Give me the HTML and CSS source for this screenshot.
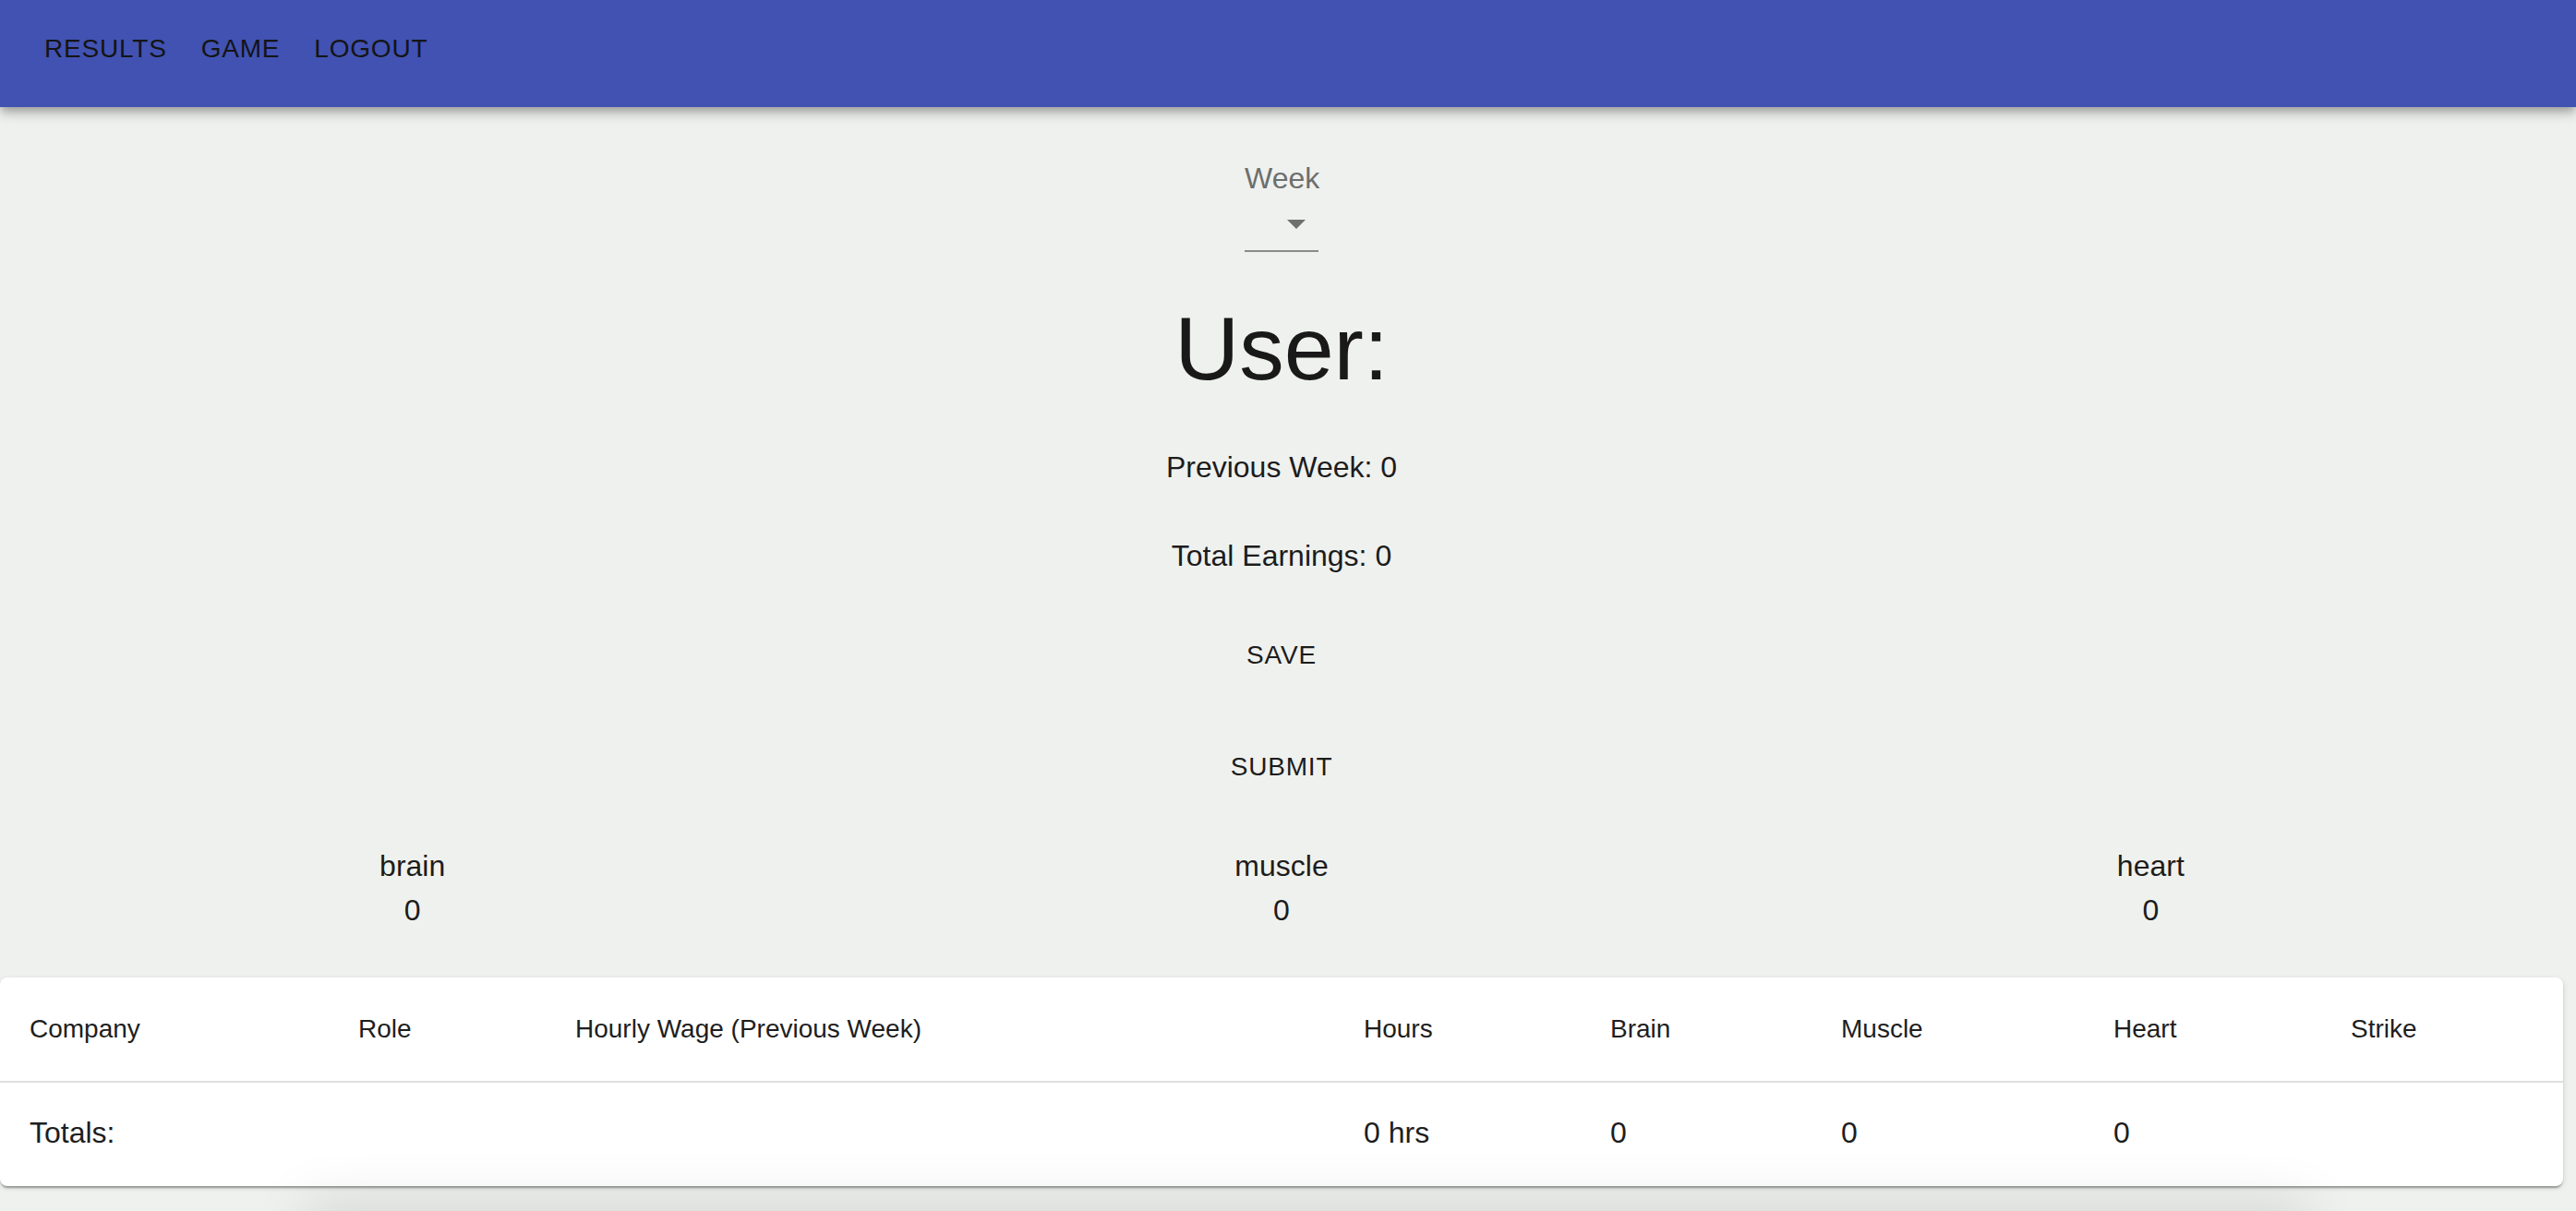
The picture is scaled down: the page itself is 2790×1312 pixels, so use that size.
FILE: index.html
```html
<!DOCTYPE html>
<html lang="en">
<head>
<meta charset="utf-8">
<title>Results</title>
<link rel="stylesheet" href="styles.css">
</head>
<body>
<header class="appbar">
  <nav class="toolbar">
    <a class="nav-btn">RESULTS</a>
    <a class="nav-btn">GAME</a>
    <a class="nav-btn">LOGOUT</a>
  </nav>
</header>
<main class="content">
  <div class="form-control">
    <label class="select-label">Week</label>
    <div class="select">
      <svg class="select-icon" viewBox="0 0 24 24" width="48" height="48"><path d="M7 10l5 5 5-5z"></path></svg>
    </div>
  </div>
  <h1 class="user-title">User:</h1>
  <p class="stat-line prev">Previous Week: 0</p>
  <p class="stat-line total">Total Earnings: 0</p>
  <button class="text-btn save">SAVE</button>
  <button class="text-btn submit">SUBMIT</button>
  <div class="attr-grid">
    <div class="attr"><div class="attr-name">brain</div><div class="attr-val">0</div></div>
    <div class="attr"><div class="attr-name">muscle</div><div class="attr-val">0</div></div>
    <div class="attr"><div class="attr-name">heart</div><div class="attr-val">0</div></div>
  </div>
  <div class="paper">
    <table class="table">
      <colgroup>
        <col class="c-company"><col class="c-role"><col class="c-wage"><col class="c-hours">
        <col class="c-brain"><col class="c-muscle"><col class="c-heart"><col class="c-strike">
      </colgroup>
      <thead>
        <tr>
          <th>Company</th><th>Role</th><th>Hourly Wage (Previous Week)</th><th>Hours</th>
          <th>Brain</th><th>Muscle</th><th>Heart</th><th>Strike</th>
        </tr>
      </thead>
      <tbody>
        <tr>
          <td>Totals:</td><td></td><td></td><td>0 hrs</td><td>0</td><td>0</td><td>0</td><td></td>
        </tr>
      </tbody>
    </table>
  </div>
</main>
<div class="bottom-sheet"></div>
</body>
</html>
```
FILE: styles.css
```css
* { box-sizing: border-box; }
html, body {
  margin: 0;
  padding: 0;
  background: #eff1ee;
  font-family: "Liberation Sans", Arial, Helvetica, sans-serif;
  color: #1c1c1c;
  overflow: hidden;
  height: 1312px;
}
.appbar {
  height: 116px;
  background: #4152b2;
  box-shadow: 0 4px 8px -2px rgba(0,0,0,.2), 0 8px 10px 0 rgba(0,0,0,.14), 0 2px 20px 0 rgba(0,0,0,.12);
  position: relative;
  z-index: 2;
}
.toolbar {
  display: flex;
  align-items: flex-start;
  gap: 37px;
  padding: 33px 0 0 48px;
  height: 116px;
}
.nav-btn {
  font-size: 28px;
  line-height: 40px;
  letter-spacing: 0.8px;
  color: #141416;
  text-decoration: none;
}
.content {
  margin-right: 14px;
  display: flex;
  flex-direction: column;
  align-items: center;
}
.form-control {
  width: 80px;
  margin-top: 61px;
  display: flex;
  flex-direction: column;
}
.select-label {
  font-size: 32px;
  line-height: 32px;
  color: #6d6e6c;
}
.select {
  height: 64px;
  border-bottom: 2px solid #8b8c8a;
  display: flex;
  justify-content: flex-end;
  align-items: flex-start;
}
.select-icon {
  margin-top: 9px;
  fill: #6f706e;
}
.user-title {
  margin: 46px 0 0;
  font-size: 97px;
  line-height: 118px;
  font-weight: 400;
  color: #1a1919;
}
.stat-line {
  margin: 0;
  font-size: 32px;
  line-height: 48px;
}
.prev { margin-top: 45px; }
.total { margin-top: 48px; }
.text-btn {
  background: none;
  border: 0;
  padding: 0;
  font-family: inherit;
  font-size: 28px;
  line-height: 40px;
  letter-spacing: 0.8px;
  color: #1c1c1c;
}
.save { margin-top: 64px; }
.submit { margin-top: 81px; }
.attr-grid {
  align-self: stretch;
  margin: 63px -24px 0;
  display: grid;
  grid-template-columns: repeat(3, 1fr);
}
.attr {
  text-align: center;
  font-size: 32px;
  line-height: 48px;
}
.paper {
  align-self: stretch;
  margin-top: 49px;
  background: #fff;
  border-radius: 8px;
  box-shadow: 0 4px 2px -2px rgba(0,0,0,.2), 0 2px 2px 0 rgba(0,0,0,.14), 0 2px 6px 0 rgba(0,0,0,.12);
  overflow: hidden;
}
.table {
  width: 100%;
  border-collapse: collapse;
  table-layout: fixed;
}
.c-company { width: 356px; }
.c-role { width: 235px; }
.c-wage { width: 854px; }
.c-hours { width: 267px; }
.c-brain { width: 250px; }
.c-muscle { width: 295px; }
.c-heart { width: 257px; }
.c-strike { width: 262px; }
.table th {
  text-align: left;
  font-weight: 400;
  font-size: 28px;
  line-height: 48px;
  padding: 32px 0 32px 32px;
  border-bottom: 2px solid #e0e0e0;
  color: #1e1e1e;
  white-space: nowrap;
}
.table td {
  font-size: 32px;
  line-height: 48px;
  padding: 30px 0 34px 32px;
  color: #1e1e1e;
}
.bottom-sheet {
  position: fixed;
  left: 340px;
  right: 300px;
  top: 1312px;
  height: 120px;
  background: #eff1ee;
  box-shadow: 0 0 60px 10px rgba(0,0,0,.10);
  z-index: 3;
}
```
